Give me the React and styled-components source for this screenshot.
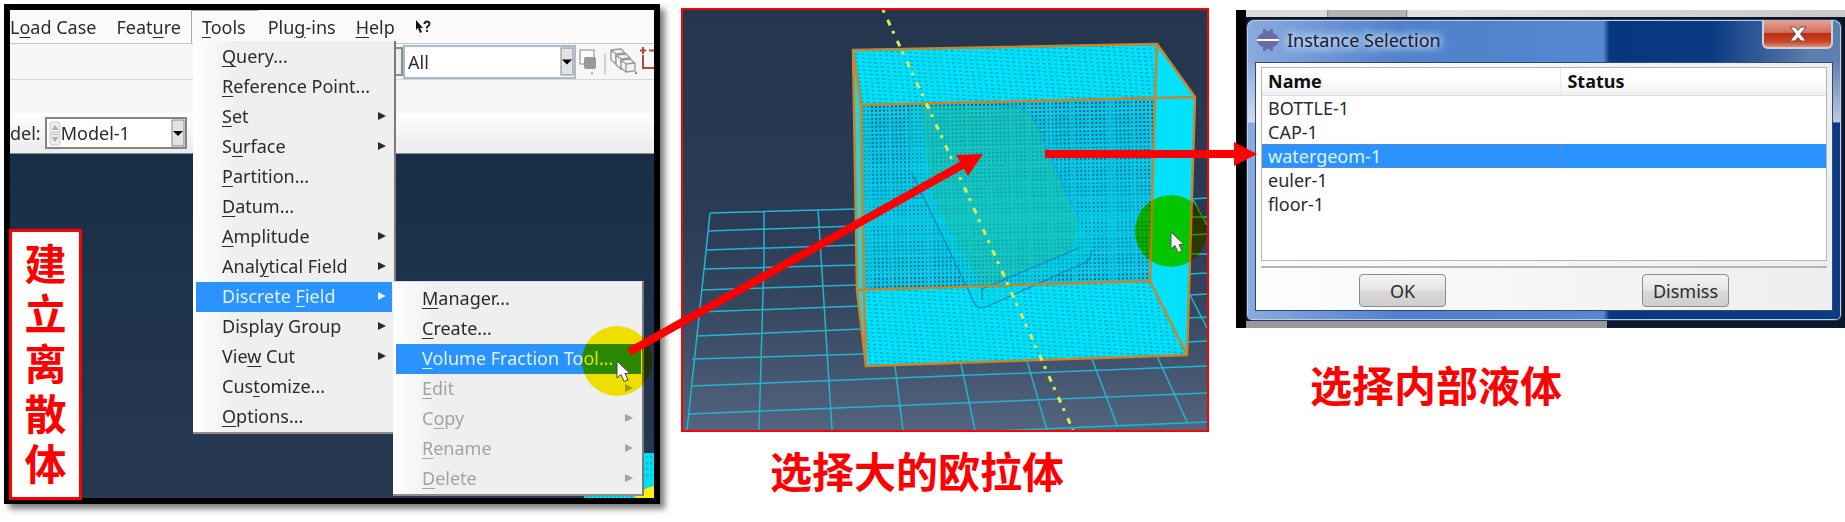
import React from "react";
import styled, { createGlobalStyle, css } from "styled-components";

const GlobalStyle = createGlobalStyle`
  * { box-sizing: border-box; }
  body {
    margin: 0;
    background: #fff;
    font-family: "Noto Sans", "Noto Sans CJK SC", sans-serif;
    font-size: 18px;
    color: #2b2b2b;
  }
  button, select, table { font: inherit; color: inherit; }
`;

const Page = styled.main`
  display: grid;
  grid-template-columns: minmax(0, 656fr) minmax(0, 528fr) minmax(0, 615fr);
  column-gap: 21px;
  align-items: start;
  padding: 4px 0 12px 4px;
`;

const Caption = styled.figcaption`
  padding-left: ${(p) => p.$indent}px;
  margin-top: ${(p) => p.$gap}px;
  font-family: "Noto Sans CJK SC", sans-serif;
  font-size: 42px;
  line-height: 56px;
  font-weight: 700;
  color: #f00;
  white-space: nowrap;
`;

/* ---------- Left: application window with open menus ---------- */

const AppFrame = styled.section`
  position: relative;
  border: 6px solid #000;
  box-shadow: 5px 5px 6px rgba(0, 0, 0, 0.5);
`;

const Screen = styled.div`
  position: relative;
  overflow: hidden;
  isolation: isolate;
  background: #f6f6f6;
`;

const MenuBar = styled.nav`
  display: flex;
  height: 34px;
  margin-left: -10px;
  background: #fafafa;
  border-bottom: 1px solid #c6c6c6;
`;

const MenuButton = styled.button`
  height: 33px;
  padding: 0 10px;
  border: 0;
  background: none;
  white-space: nowrap;
  ${(p) =>
    p.$open &&
    css`
      padding: 0 12px 0 10px;
      border-top: 1px solid #a9a9a9;
      border-left: 1px solid #a9a9a9;
    `}
`;

const Key = styled.u`
  text-decoration-thickness: 1px;
  text-underline-offset: 3px;
`;

const Toolbar = styled.div`
  display: flex;
  justify-content: flex-end;
  align-items: center;
  height: 36px;
  border-bottom: 1px solid #d4d8dc;
`;

const ModelBar = styled.div`
  display: flex;
  align-items: center;
  gap: 4px;
  height: 41px;
  margin-top: 33px;
  background: linear-gradient(#fefefe, #ececec);
  border-bottom: 1px solid #8a8f96;
`;

const Combo = styled.div`
  display: flex;
  align-items: center;
  width: ${(p) => p.$width}px;
  height: ${(p) => p.$height}px;
  border: 2px solid ${(p) => p.$edge};
  background: #fff;

  select {
    flex: 1;
    min-width: 0;
    height: 100%;
    padding: 0 ${(p) => p.$inset}px;
    border: 0;
    appearance: none;
    background: none;
  }
  > svg { flex: none; }
`;

const ComboStub = styled.span`
  width: 7px;
  height: 29px;
  border: 2px solid #8d8d8d;
  border-left: 0;
  background: #eee;
`;

const ToolIcons = styled.svg`
  flex: none;
  display: block;
`;

const Viewport = styled.div`
  position: relative;
  height: 344px;
  background: linear-gradient(#1a2d47, #273952);
`;

const MeshCorner = styled.svg`
  position: absolute;
  right: 0;
  bottom: 0;
`;

const menuSurface = css`
  position: absolute;
  margin: 0;
  list-style: none;
  background: linear-gradient(90deg, #fff, #efefef 44px);
  border-right: 2px solid #7b7b7b;
  border-bottom: 2px solid #8d8d8d;
`;

const Menu = styled.ul`
  ${menuSurface}
  z-index: 2;
  left: 183px;
  top: 31px;
  width: 203px;
  padding: 1px 2px 0 3px;
`;

const SubMenu = styled.ul`
  ${menuSurface}
  z-index: 3;
  left: 197px;
  top: -1px;
  width: 251px;
  padding: 2px 1px 0 3px;
  border-top: 1px solid #d8dce2;
`;

const MenuEntry = styled.li`
  position: relative;
`;

const MenuItem = styled.button`
  display: flex;
  align-items: center;
  justify-content: space-between;
  width: 100%;
  height: 30px;
  padding: 0 ${(p) => (p.$sub ? 8 : 6)}px 2px 26px;
  border: 0;
  text-align: left;
  white-space: nowrap;
  background: ${(p) => (p.$active ? "#2a93ff" : "none")};
  color: ${(p) => (p.$active ? "#dff3ff" : p.disabled ? "#a3a3a3" : "#2b2b2b")};
`;

const SideTitle = styled.h2`
  position: absolute;
  z-index: 4;
  left: -1px;
  bottom: -2px;
  width: 73px;
  margin: 0;
  padding: 5px 0 10px;
  border: 3px solid #f00;
  background: #fff;
  color: #f00;
  font-family: "Noto Sans CJK SC", sans-serif;
  font-size: 42px;
  line-height: 50px;
  font-weight: 700;
  text-align: center;
  word-break: break-all;
`;

const ClickSpot = styled.span`
  position: absolute;
  z-index: 5;
  left: 572px;
  top: 316px;
  width: 70px;
  height: 70px;
  border-radius: 50%;
  background: #ffee00;
  mix-blend-mode: multiply;
`;

const ClickCursor = styled.svg`
  position: absolute;
  z-index: 6;
  left: 606px;
  top: 350px;
`;

/* ---------- Middle: 3D view ---------- */

const SceneFigure = styled.figure`
  margin: 4px 0 0;
`;

const SceneFrame = styled.div`
  position: relative;
  z-index: 7;
  border: 2px solid #f00;
`;

const SceneSvg = styled.svg`
  display: block;
  width: 100%;
  height: auto;
  isolation: isolate;
`;

const ArrowLayer = styled.svg`
  position: absolute;
  inset: 0;
  width: 100%;
  height: 100%;
  overflow: visible;
  pointer-events: none;
`;

/* ---------- Right: dialog ---------- */

const DialogFigure = styled.figure`
  margin: 6px 0 0;
  padding-left: 6px;
`;

const Desktop = styled.div`
  padding: 9px 3px 7px 10px;
  background:
    linear-gradient(#000, #000) 0 0 / 10px 100% no-repeat,
    linear-gradient(90deg, #dcdcdc 91px, #888 91px, #b4b4b4 93px, #b4b4b4 170px, #777 170px, #e4e4e4 172px, #c9c9c9) 0 0 / 100% 7px no-repeat,
    linear-gradient(90deg, #979797 61%, #0d1a2e 61%) 0 100% / 100% 7px no-repeat,
    #0b1526;
`;

const Dialog = styled.section`
  padding: 0 8px 9px;
  border: 1px solid #2a3a58;
  border-radius: 8px 8px 6px 6px;
  box-shadow: inset 0 0 0 1px #b9cdea;
  background:
    linear-gradient(transparent 40px, rgba(255, 255, 255, 0.6) 102px, transparent 103px),
    linear-gradient(90deg, transparent 78%, rgba(150, 170, 205, 0.6) 95%) 0 0 / 100% 102px no-repeat,
    linear-gradient(90deg, #8aabdf, #4f80cb 26%, #5588d0 60%, #07387f 61%, #0b3b85);
`;

const TitleBar = styled.header`
  display: flex;
  align-items: flex-start;
  height: 42px;

  h2 {
    flex: 1;
    margin: 0 0 0 8px;
    font-size: 18px;
    line-height: 40px;
    font-weight: 400;
    color: #142033;
    text-shadow: 0 0 8px #dce9fb, 0 0 8px #dce9fb, 0 0 14px #c3d7f3;
  }
  > svg { margin: 9px 0 0 2px; }
`;

const CloseButton = styled.button`
  display: flex;
  justify-content: center;
  align-items: center;
  width: 71px;
  height: 29px;
  padding: 0;
  border: 2px solid #c9d3e4;
  border-top: 0;
  border-radius: 0 0 6px 6px;
  background: linear-gradient(#e3a497, #d2705c 46%, #bd2d12 50%, #cc4527 80%, #e08b72);
`;

const Client = styled.div`
  padding: 4px 5px 0;
  border: 1px solid #33486e;
  background: linear-gradient(90deg, #fdfdfd, #eee);
`;

const ListBox = styled.div`
  height: 194px;
  border: 1px solid #b4b8b4;
  background: #fff;
`;

const InstanceTable = styled.table`
  width: 100%;
  border-collapse: collapse;
  table-layout: fixed;

  th, td {
    height: 24px;
    padding: 0 6px;
    line-height: 24px;
    text-align: left;
    font-weight: 400;
  }
  thead th {
    height: 27px;
    font-weight: 700;
    color: #111;
    background: linear-gradient(#fff 40%, #f0f1f3);
    border-bottom: 1px solid #dcdde0;
  }
  thead th:first-child {
    width: 53%;
    border-right: 1px solid #e8e8ea;
  }
`;

const InstanceRow = styled.tr`
  ${(p) =>
    p.$selected &&
    css`
      background: #2a93ff;
      color: #dff3ff;
      th { outline: 1px dotted #7e8792; outline-offset: -1px; }
    `}
`;

const ButtonRow = styled.footer`
  display: grid;
  grid-template-columns: 1fr 1fr;
  justify-items: center;
  margin-top: 5px;
  padding: 6px 0 3px;
  border-top: 2px solid #b4b6b4;
`;

const PushButton = styled.button`
  width: 87px;
  height: 33px;
  padding: 0;
  border: 1px solid #8b8b8b;
  border-radius: 4px;
  background: linear-gradient(#f3f3f3, #e6e6e6 48%, #d8d8d8 52%, #cfcfcf);
`;

/* ---------- Small drawings ---------- */

const Triangle = () => (
  <svg width="8" height="10" viewBox="0 0 8 10" aria-hidden="true">
    <path d="M0 1 8 5 0 9z" fill="currentColor" />
  </svg>
);

const DropArrow = ({ height }) => (
  <svg width="14" height={height} viewBox={`0 0 14 ${height}`} aria-hidden="true">
    <rect x="1" y="1" width="12" height={height - 2} fill="#e2e2e2" stroke="#858585" />
    <path d={`M2 ${height / 2 - 2}h10l-5 5z`} fill="#000" />
  </svg>
);

const Spinner = () => (
  <svg width="14" height="27" viewBox="0 0 14 27" aria-hidden="true">
    <rect x="3" y="2" width="10" height="23" rx="2" fill="#eee" stroke="#ccc" />
    <path d="M4.500 10h7l-3.500-5zM4.500 17h7l-3.500 5z" fill="#b0b0b0" />
    <path d="M4 12.500h8M4 14.500h8" stroke="#c4c4c4" />
  </svg>
);

const cursorPath = "M0 0v17l4-3.500 3 7 4-1.500-3-6.500h5z";

const menuItems = [
  ["", "Q", "uery..."],
  ["", "R", "eference Point..."],
  ["", "S", "et", true],
  ["S", "u", "rface", true],
  ["", "P", "artition..."],
  ["", "D", "atum..."],
  ["", "A", "mplitude", true],
  ["Anal", "y", "tical Field", true],
  ["Discrete ", "F", "ield", true],
  ["Display Group", "", "", true],
  ["Vie", "w", " Cut", true],
  ["Cus", "t", "omize..."],
  ["", "O", "ptions..."],
];

const subItems = [
  ["", "M", "anager..."],
  ["", "C", "reate..."],
  ["", "V", "olume Fraction Tool..."],
  ["", "E", "dit", true],
  ["C", "o", "py", true],
  ["", "R", "ename", true],
  ["", "D", "elete", true],
];

const Label = ({ parts: [before, key, after] }) => (
  <span>
    {before}
    {key && <Key>{key}</Key>}
    {after}
  </span>
);

function ToolsMenu() {
  return (
    <Menu>
      {menuItems.map((item, i) => (
        <MenuEntry key={i}>
          <MenuItem $active={i === 8}>
            <Label parts={item} />
            {item[3] && <Triangle />}
          </MenuItem>
          {i === 8 && (
            <SubMenu>
              {subItems.map((sub, j) => (
                <MenuEntry key={j}>
                  <MenuItem $sub $active={j === 2} disabled={j > 2}>
                    <Label parts={sub} />
                    {sub[3] && <Triangle />}
                  </MenuItem>
                </MenuEntry>
              ))}
            </SubMenu>
          )}
        </MenuEntry>
      ))}
    </Menu>
  );
}

function AppWindow() {
  return (
    <AppFrame>
      <Screen>
        <MenuBar>
          <MenuButton>L<Key>o</Key>ad Case</MenuButton>
          <MenuButton>Feat<Key>u</Key>re</MenuButton>
          <MenuButton $open><Key>T</Key>ools</MenuButton>
          <MenuButton>Plu<Key>g</Key>-ins</MenuButton>
          <MenuButton><Key>H</Key>elp</MenuButton>
          <MenuButton aria-label="Context help">
            <svg width="16" height="14" viewBox="0 0 16 14">
              <path d="M1 0v10l2-2 2 5 2-1-2-4h3z" fill="#111" />
              <path d="M9.500 4q0-2.500 2.500-2.500t2.500 2.500q0 1.500-2.500 3v1.500M12 10v2" fill="none" stroke="#222" strokeWidth="2" />
            </svg>
          </MenuButton>
        </MenuBar>
        <Toolbar>
          <ComboStub />
          <Combo $width={173} $height={34} $edge="#a9bacb" $inset={3}>
            <select aria-label="Selection filter"><option>All</option></select>
            <DropArrow height={29} />
          </Combo>
          <ToolIcons width="78" height="34" viewBox="576 45 78 34" aria-hidden="true">
            <rect x="580" y="50" width="14" height="14" fill="#fafafa" stroke="#aaa" strokeWidth="1.500" />
            <rect x="584" y="57" width="12" height="12" rx="2" fill="#999" />
            <path d="M592 72v2" stroke="#999" strokeWidth="1.500" />
            <path d="M605 54v20" stroke="#aaa" />
            <g fill="#f2f2f2" stroke="#999" strokeWidth="1.300">
              <path d="M611 50l10-1 4 4v10l-9 1-5-4zM611 50l5 4v10M616 54l9-1" />
              <path d="M616 55l10-1 4 4v10l-9 1-5-4zM616 55l5 4v10M621 59l9-1" />
              <path d="M621 60l9-1 5 4v8l-9 1-5-4zM621 60l5 4v8M626 64l9-1" />
            </g>
            <path d="M634 74h3v-3z" fill="#888" />
            <path d="M643 47v7M640 50.500h6M649 50.500h5M643 55v13h11" fill="none" stroke="#ad4a3a" strokeWidth="2" />
          </ToolIcons>
        </Toolbar>
        <ModelBar>
          <label htmlFor="model">del:</label>
          <Combo $width={142} $height={32} $edge="#858585" $inset={0}>
            <Spinner />
            <select id="model"><option>Model-1</option></select>
            <DropArrow height={28} />
          </Combo>
        </ModelBar>
        <Viewport>
          <MeshCorner width="70" height="45" viewBox="0 0 70 45" aria-hidden="true">
            <path d="M0 45V41L58 0h12v45z" fill="#00dcf5" />
            <path d="M62 4h8M62 10h8M62 16h8M62 22h8M2 43h48" stroke="#078fa8" strokeDasharray="2 2" />
            <path d="M50 45q8-10 20-12v12z" fill="#fff000" />
          </MeshCorner>
        </Viewport>
        <ToolsMenu />
        <ClickSpot />
        <ClickCursor width="16" height="24" viewBox="-1 -1 16 24" aria-hidden="true">
          <path d={cursorPath} fill="#fff" stroke="#444" />
        </ClickCursor>
      </Screen>
      <SideTitle>建立离散体</SideTitle>
    </AppFrame>
  );
}

const floorLines = [
  "M710 213 857 209M708 231 857 226M706 250 857 245M704 269 857 265M701 290 857 285",
  "M699 312 860 306M697 336 862 329M692 359 864 354M692 386 1207 366M689 414 1207 393M900 435 1207 422",
  "M1190 199 1207 198M1190 217H1207M1190 235 1207 234M1188 254H1207M1188 274 1207 273M1188 295 1207 294M1188 318 1207 317M1188 342 1207 341",
  "M710 213 687 430M764 211 764 260 759 430M818 209 832 430M895 366 903 430M961 364 975 430M1027 361 1047 430M1092 359 1117 425M1157 356 1187 422M1190 295 1207 328M1192 198 1207 225",
].join("");

const backWall = "M861 105 1155 97 1150 281 864 289z";

function Scene() {
  return (
    <SceneFrame>
      <SceneSvg viewBox="683 10 524 420" role="img" aria-label="Euler box around the bottle">
        <defs>
          <linearGradient id="sky" x1="0" y1="0" x2="0" y2="1">
            <stop offset="0" stopColor="#24354e" />
            <stop offset="0.5" stopColor="#2b3b56" />
            <stop offset="0.7" stopColor="#35465f" />
            <stop offset="1" stopColor="#52647e" />
          </linearGradient>
          <pattern id="back" width="4" height="4" patternUnits="userSpaceOnUse" patternTransform="rotate(-1)">
            <rect width="4" height="4" fill="#08c6e6" />
            <rect x="1" y="1" width="2" height="2" fill="#06506e" />
          </pattern>
          <pattern id="face" width="6" height="4" patternUnits="userSpaceOnUse" patternTransform="skewX(10) rotate(3)">
            <rect width="6" height="4" fill="#00e1fb" />
            <rect x="1" y="1" width="3" height="1" fill="#0a93ae" />
          </pattern>
          <pattern id="side" width="5" height="5" patternUnits="userSpaceOnUse" patternTransform="skewY(30)">
            <rect width="5" height="5" fill="#00e3ff" />
            <rect x="1" y="1" width="2" height="1" fill="#12cfe8" />
          </pattern>
          <pattern id="bands" width="61" height="53" patternUnits="userSpaceOnUse" patternTransform="rotate(-1)">
            <path d="M8 0v53M12 0v53M33 0v53M50 0v53M0 6h61M0 22h61M0 26h61M0 42h61" stroke="#1fd0ee" strokeWidth="2" opacity="0.55" />
          </pattern>
          <linearGradient id="veil" x1="0" y1="0" x2="0" y2="1">
            <stop offset="0" stopColor="#00b7d8" stopOpacity="0.1" />
            <stop offset="0.65" stopColor="#00cfea" stopOpacity="0.5" />
            <stop offset="1" stopColor="#00cfea" stopOpacity="0.15" />
          </linearGradient>
        </defs>
        <rect x="683" y="10" width="524" height="420" fill="url(#sky)" />
        <path d={floorLines} fill="none" stroke="#25b4cd" strokeWidth="1.500" />
        <path d="M853 50 1157 44 1155 97 861 105z" fill="url(#face)" />
        <path d="M864 289 1150 281 1187 355 866 366z" fill="url(#face)" />
        <path d={backWall} fill="url(#back)" />
        <path d={backWall} fill="url(#bands)" />
        <path d={backWall} fill="url(#veil)" />
        <path d="M1157 44 1195 97 1187 355 1150 281z" fill="url(#side)" />
        <path d="M853 50 861 105 864 289 866 366 857 290z" fill="#35cfd0" />
        <path d="M910 106H1018Q1030 108 1036 124L1090 242Q1094 254 1084 262L985 307Q976 308 972 300L912 173Q904 130 910 106z" fill="#00d4e0" opacity="0.4" />
        <path d="M920 106H1018Q1030 108 1036 124L1078 222 1072 250 982 288 934 200z" fill="#3fae62" opacity="0.25" />
        <path d="M912 173 976 306Q980 309 986 307L1086 262Q1092 258 1091 250M1079 248 982 289V300" fill="none" stroke="#0b86c0" strokeWidth="1.200" />
        <path d="M910 106V166M1000 106Q1028 104 1036 124L1080 222" fill="none" stroke="#12a9d6" strokeWidth="1.200" />
        <path d="M853 50 1157 44 1195 97 1187 355 866 366 857 290zM853 50 861 105 864 289 866 366M861 105 1195 97M1157 44 1155 97 1150 281 1187 355M857 290 1150 281" fill="none" stroke="#c9852a" strokeWidth="2.500" strokeLinejoin="round" />
        <path d="M883 10 940 133 996 258 1073 430" fill="none" stroke="#d9ee4e" strokeWidth="3" strokeDasharray="3 8 6 6" />
        <circle cx="1171" cy="231" r="36" fill="#ffe000" style={{ mixBlendMode: "multiply" }} />
        <path d={cursorPath} transform="translate(1171 232)" fill="#f4f4f4" stroke="#555" />
      </SceneSvg>
      <ArrowLayer viewBox="683 10 524 420" aria-hidden="true">
        <path d="M629 352 964 164M1045 154H1236" stroke="#f00" strokeWidth="8" />
        <path d="M983 154 956 155 968 176zM1257 154 1234 142v24z" fill="#f00" />
      </ArrowLayer>
    </SceneFrame>
  );
}

const instances = ["BOTTLE-1", "CAP-1", "watergeom-1", "euler-1", "floor-1"];

function InstanceDialog() {
  return (
    <Desktop>
      <Dialog>
        <TitleBar>
          <svg width="22" height="22" viewBox="0 0 22 22" aria-hidden="true">
            <path d="M6 0h3v2h4V0h3v4q5 2 6 6H0q1-4 6-6zM0 12h22q-1 4-6 6v4h-3v-2H9v2H6v-4q-5-2-6-6z" fill="#6d6aa8" />
            <path d="M0 11h22" stroke="#fff" strokeWidth="2" />
          </svg>
          <h2>Instance Selection</h2>
          <CloseButton aria-label="Close">
            <svg width="18" height="16" viewBox="0 0 18 16">
              <path d="M1 1h5l3 3.500L12 1h5l-5.500 7 5.500 7h-5l-3-3.500L6 15H1l5.500-7z" fill="#fff" stroke="#6d4a4a" />
            </svg>
          </CloseButton>
        </TitleBar>
        <Client>
          <ListBox>
            <InstanceTable>
              <thead>
                <tr><th scope="col">Name</th><th scope="col">Status</th></tr>
              </thead>
              <tbody>
                {instances.map((name) => (
                  <InstanceRow key={name} $selected={name === "watergeom-1"}>
                    <th scope="row">{name}</th>
                    <td />
                  </InstanceRow>
                ))}
              </tbody>
            </InstanceTable>
          </ListBox>
          <ButtonRow>
            <PushButton>OK</PushButton>
            <PushButton>Dismiss</PushButton>
          </ButtonRow>
        </Client>
      </Dialog>
    </Desktop>
  );
}

export default function App() {
  return (
    <>
      <GlobalStyle />
      <Page>
        <AppWindow />
        <SceneFigure>
          <Scene />
          <Caption $indent={89} $gap={10}>选择大的欧拉体</Caption>
        </SceneFigure>
        <DialogFigure>
          <InstanceDialog />
          <Caption $indent={74} $gap={28}>选择内部液体</Caption>
        </DialogFigure>
      </Page>
    </>
  );
}
